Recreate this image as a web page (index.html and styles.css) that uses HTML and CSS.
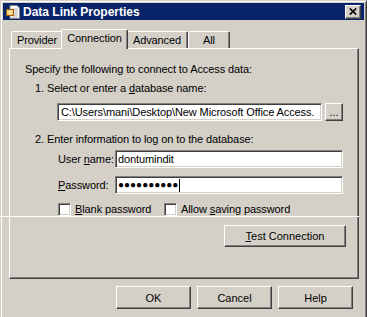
FILE: index.html
```html
<!DOCTYPE html>
<html>
<head>
<meta charset="utf-8">
<link rel="stylesheet" href="styles.css">
</head>
<body>
<div class="window">
  <div class="titlebar">
    <svg class="app-icon" viewBox="0 0 16 16" width="16" height="16">
      <path d="M5 1.5h7l2.5 2.5v10.5h-9.5z" fill="#fff" stroke="#808080"/>
      <path d="M7 5h6M7 7h6M7 9h6M7 11h6M7 13h6" stroke="#b0b0b0"/>
      <rect x="1.5" y="5.5" width="7" height="6" fill="#f0b040" stroke="#a06010"/>
      <path d="M2 7.5h6M2 9.5h6M5 6v5" stroke="#fff4c0"/>
    </svg>
    <span class="title">Data Link Properties</span>
    <button class="close" aria-label="Close">
      <svg viewBox="0 0 8 7" width="8" height="7"><path d="M0.8 0.5L7.2 6.5M7.2 0.5L0.8 6.5" stroke="#000" stroke-width="1.7"/></svg>
    </button>
  </div>
  <div class="dialog">
    <div class="tabs">
      <div class="tab t-provider">Provider</div>
      <div class="tab active t-connection">Connection</div>
      <div class="tab t-advanced">Advanced</div>
      <div class="tab t-all">All</div>
    </div>
    <div class="panel">
      <p class="intro">Specify the following to connect to Access data:</p>
      <p class="step step1">1. Select or enter a <u>d</u>atabase name:</p>
      <div class="path-row">
        <div class="field path">C:\Users\mani\Desktop\New Microsoft Office Access.</div>
        <button class="btn browse">...</button>
      </div>
      <p class="step step2">2. Enter information to log on to the database:</p>
      <div class="login-row user-row">
        <span class="lbl">User <u>n</u>ame:</span>
        <div class="field login">dontumindit</div>
      </div>
      <div class="login-row pass-row">
        <span class="lbl"><u>P</u>assword:</span>
        <div class="field login"><span class="dots">●●●●●●●●●●</span><span class="caret"></span></div>
      </div>
      <div class="checks">
        <span class="cb"></span><span class="cb-label cb-label1"><u>B</u>lank password</span>
        <span class="cb"></span><span class="cb-label">Allow <u>s</u>aving password</span>
      </div>
      <div class="test-row">
        <button class="btn test"><u>T</u>est Connection</button>
      </div>
    </div>
    <div class="footer">
      <button class="btn action">OK</button>
      <button class="btn action">Cancel</button>
      <button class="btn action">Help</button>
    </div>
  </div>
</div>
<div class="glitch"></div>
</body>
</html>
```
FILE: styles.css
```css
* { box-sizing: border-box; }
html, body { margin: 0; padding: 0; }
body {
  background: #d4d0c8;
  font-family: "Liberation Sans", Arial, sans-serif;
  font-size: 11px;
  letter-spacing: -0.1px;
  color: #000;
  overflow: hidden;
  width: 367px;
  height: 317px;
}
.window {
  width: 367px;
  height: 317px;
  border-left: 1px solid #d4d0c8;
  border-top: 1px solid #d4d0c8;
  border-right: 1px solid #404040;
  box-shadow: inset 1px 1px #fff, inset -1px 0 #808080;
  padding: 2px 2px 0 2px;
}
.titlebar {
  height: 17px;
  background: #0a246a;
  display: flex;
  align-items: center;
  padding: 0 3px 0 2px;
  color: #fff;
}
.app-icon { flex: none; margin-right: 2px; }
.title {
  flex: 1;
  font-weight: bold;
  font-size: 12px;
  letter-spacing: 0;
}
.close {
  width: 16px;
  height: 14px;
  padding: 0;
  background: #d4d0c8;
  border: 1px solid;
  border-color: #fff #404040 #404040 #fff;
  box-shadow: inset -1px -1px #808080;
  display: flex;
  align-items: center;
  justify-content: center;
}
.dialog { padding: 9px 5px 0 6px; }
.tabs {
  display: flex;
  align-items: flex-end;
  height: 19px;
  padding-left: 2px;
  position: relative;
  z-index: 1;
}
.tab {
  height: 17px;
  border: 1px solid;
  border-bottom: none;
  border-color: #fff #404040 transparent #fff;
  box-shadow: inset -1px 0 #808080;
  border-radius: 2px 2px 0 0;
  text-align: center;
  line-height: 17px;
  background: #d4d0c8;
}
.t-provider { width: 52px; }
.t-advanced { width: 62px; }
.t-all { width: 42px; }
.tab.active {
  width: 67px;
  height: 20px;
  margin: 0 -2px -1px;
  line-height: 16px;
  position: relative;
  z-index: 2;
}
.panel {
  height: 231px;
  border: 1px solid;
  border-color: #fff #404040 #404040 #fff;
  box-shadow: inset -1px -1px #808080;
  padding-top: 14px;
}
p { margin: 0; line-height: 13px; white-space: nowrap; }
.intro { margin-left: 15px; }
.step { margin-left: 25px; }
.step1 { margin-top: 6px; }
.step2 { margin-top: 12px; }
.field {
  background: #fff;
  border: 1px solid;
  border-color: #808080 #fff #fff #808080;
  box-shadow: inset 1px 1px #404040, inset -1px -1px #d4d0c8;
  white-space: nowrap;
  overflow: hidden;
  line-height: 16px;
}
.path-row {
  display: flex;
  gap: 3px;
  margin: 8px 0 0 47px;
  height: 18px;
}
.path { width: 265px; padding-left: 3px; }
.btn {
  background: #d4d0c8;
  border: 1px solid;
  border-color: #fff #404040 #404040 #fff;
  box-shadow: inset -1px -1px #808080;
  font: inherit;
  color: #000;
  padding: 0;
}
.browse { width: 18px; height: 18px; line-height: 12px; }
.login-row {
  display: flex;
  align-items: center;
  height: 18px;
  margin-left: 48px;
}
.user-row { margin-top: 4px; }
.pass-row { margin-top: 8px; }
.lbl { width: 57px; }
.login { width: 228px; height: 18px; padding-left: 2px; display: flex; align-items: center; }
.dots { font-size: 10px; letter-spacing: 0; line-height: 16px; }
.caret { width: 1px; height: 13px; background: #000; margin-left: 1px; }
.checks {
  display: flex;
  align-items: center;
  height: 13px;
  margin: 9px 0 0 48px;
}
.cb {
  width: 13px;
  height: 13px;
  flex: none;
  background: #fff;
  border: 1px solid;
  border-color: #808080 #fff #fff #808080;
  box-shadow: inset 1px 1px #404040, inset -1px -1px #d4d0c8;
}
.cb-label { margin-left: 4px; line-height: 13px; }
.cb-label1 { width: 89px; }
.test-row {
  display: flex;
  justify-content: flex-end;
  padding-right: 12px;
  margin-top: 9px;
}
.test { width: 122px; height: 22px; }
.footer {
  display: flex;
  justify-content: flex-end;
  gap: 6px;
  margin-top: 7px;
  padding-right: 6px;
}
.action { width: 75px; height: 23px; }
.glitch {
  position: absolute;
  left: 0;
  top: 216px;
  width: 359px;
  height: 1px;
  background: #fff;
}
```
